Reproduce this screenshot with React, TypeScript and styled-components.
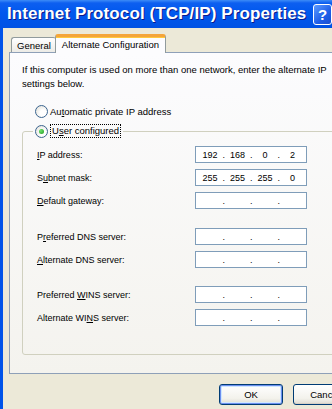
import styled, { createGlobalStyle } from 'styled-components';

const GlobalStyle = createGlobalStyle`
  body {
    margin: 0;
    overflow: hidden;
    background: #ece9d8;
    font-family: "Liberation Sans", Arial, sans-serif;
    color: #000;
  }
`;

const Window = styled.div`
  width: 366px;
  height: 409px;
  display: flex;
  flex-direction: column;
`;

const TitleBar = styled.div`
  height: 28px;
  flex-shrink: 0;
  display: flex;
  align-items: center;
  padding: 0 13px 0 7px;
  background: linear-gradient(#3d8cf7 0, #0d5ff0 3px, #0058ee 45%, #0052e4 100%);
`;

const Title = styled.div`
  font-size: 17px;
  font-weight: bold;
  letter-spacing: 0.1px;
  color: #fff;
  text-shadow: 1px 1px 0 #0c1a8a;
  white-space: nowrap;
`;

const TitleButtons = styled.div`
  margin-left: auto;
  display: flex;
  gap: 2px;
`;

const CaptionButton = styled.div<{ $close?: boolean }>`
  width: 19px;
  height: 21px;
  box-sizing: border-box;
  border: 1px solid #fff;
  border-radius: 3px;
  display: flex;
  align-items: center;
  justify-content: center;
  font-size: 15px;
  font-weight: bold;
  color: #fff;
  background: ${(p) =>
    p.$close
      ? 'linear-gradient(135deg, #e97c5c, #c8401a)'
      : 'linear-gradient(135deg, #5d9bff, #1e5ee8 60%, #1a4fcf)'};
`;

const Frame = styled.div`
  flex: 1;
  border-left: 3px solid #0053e9;
  border-right: 3px solid #0053e9;
  padding: 6px 6px 0 6px;
  background: #ece9d8;
`;

const TabRow = styled.div`
  display: flex;
  align-items: flex-end;
  height: 18px;
  padding-left: 2px;
  position: relative;
  z-index: 1;
`;

const Tab = styled.div<{ $active?: boolean }>`
  box-sizing: border-box;
  display: flex;
  align-items: center;
  font-size: 9.5px;
  white-space: nowrap;
  border: 1px solid #919b9c;
  border-bottom: none;
  border-radius: 3px 3px 0 0;
  ${(p) =>
    p.$active
      ? `
    height: 19px;
    margin-bottom: -1px;
    margin-left: -1px;
    padding: 0 6px 2px;
    border-top: 3px solid #f4a53a;
    box-shadow: inset 0 1px 0 #ffc83c;
    background: #fcfcfe;
  `
      : `
    height: 15px;
    padding: 0 5px;
    border-right: none;
    background: linear-gradient(#ffffff, #ecebe6);
  `}
`;

const Panel = styled.div`
  border: 1px solid #8ea0b8;
  background: linear-gradient(#fcfcfe, #f4f3ee);
  padding: 10px 12px 18px 12px;
`;

const Description = styled.p`
  margin: 0;
  font-size: 9.5px;
  line-height: 14px;
`;

const RadioRow = styled.div<{ $indent?: boolean }>`
  display: flex;
  align-items: center;
  gap: 2px;
  height: 16px;
  font-size: 9.5px;
  margin: ${(p) => (p.$indent ? '12px 0 0 13px' : '0')};
`;

const RadioCircle = styled.span<{ $checked?: boolean }>`
  width: 13px;
  height: 13px;
  box-sizing: border-box;
  border-radius: 50%;
  border: 1px solid #3b6590;
  background: radial-gradient(circle at 65% 65%, #ffffff 30%, #dcdbd3 100%);
  display: flex;
  align-items: center;
  justify-content: center;
  &::after {
    content: '';
    display: ${(p) => (p.$checked ? 'block' : 'none')};
    width: 5px;
    height: 5px;
    border-radius: 50%;
    background: radial-gradient(circle at 35% 35%, #6ee26e, #1f9a1f);
  }
`;

const Focus = styled.span`
  border: 1px dotted #000;
  padding: 0 1px;
  line-height: 12px;
`;

const Key = styled.span`
  text-decoration: underline;
`;

const GroupBox = styled.fieldset`
  margin: 4px 0 0 0;
  min-width: 0;
  border: 1px solid #d0d0bf;
  border-radius: 3px;
  padding: 7px 0 28px 10px;
`;

const Legend = styled.legend`
  padding: 0 2px;
  height: 16px;
`;

const FieldGroup = styled.div<{ $space: number }>`
  display: grid;
  grid-template-columns: 158px 112px;
  grid-auto-rows: 17px;
  row-gap: 6px;
  align-items: center;
  padding: ${(p) => p.$space}px 0 0 4px;
`;

const Label = styled.div`
  font-size: 9px;
  white-space: nowrap;
`;

const IpBox = styled.div`
  box-sizing: border-box;
  height: 17px;
  border: 1px solid #7f9db9;
  background: #fff;
  display: flex;
  align-items: center;
  padding-left: 4px;
  font-size: 9px;
`;

const Octet = styled.span`
  width: 20px;
  text-align: center;
`;

const Dot = styled.span`
  width: 7.5px;
  text-align: center;
`;

const ButtonRow = styled.div`
  display: flex;
  justify-content: flex-end;
  gap: 10px;
  margin-top: 10px;
`;

const Button = styled.div<{ $default?: boolean }>`
  width: 64px;
  height: 21px;
  box-sizing: border-box;
  border: 1px solid #003c74;
  border-radius: 3px;
  display: flex;
  align-items: center;
  justify-content: center;
  font-size: 9.5px;
  background: linear-gradient(#ffffff, #f3f2ec 70%, #dedcd2);
  box-shadow: ${(p) =>
    p.$default ? 'inset 0 0 0 1px #6b8eee, inset 0 0 0 2px #cee7ff' : 'inset 0 -1px 0 #d6d0c5'};
`;

type Field = { label: React.ReactNode; value?: string[] };

function IpField({ value }: { value?: string[] }) {
  const parts = value ?? ['', '', '', ''];
  return (
    <IpBox>
      {parts.map((p, i) => (
        <span key={i} style={{ display: 'contents' }}>
          <Octet>{p}</Octet>
          {i < 3 && <Dot>.</Dot>}
        </span>
      ))}
    </IpBox>
  );
}

const groups: { space: number; fields: Field[] }[] = [
  {
    space: 0,
    fields: [
      { label: <><Key>I</Key>P address:</>, value: ['192', '168', '0', '2'] },
      { label: <>S<Key>u</Key>bnet mask:</>, value: ['255', '255', '255', '0'] },
      { label: <><Key>D</Key>efault gateway:</> },
    ],
  },
  {
    space: 19,
    fields: [
      { label: <>P<Key>r</Key>eferred DNS server:</> },
      { label: <><Key>A</Key>lternate DNS server:</> },
    ],
  },
  {
    space: 18,
    fields: [
      { label: <>Preferred <Key>W</Key>INS server:</> },
      { label: <>Alternate WI<Key>N</Key>S server:</> },
    ],
  },
];

export default function App() {
  return (
    <Window>
      <GlobalStyle />
      <TitleBar>
        <Title>Internet Protocol (TCP/IP) Properties</Title>
        <TitleButtons>
          <CaptionButton>?</CaptionButton>
          <CaptionButton $close>×</CaptionButton>
        </TitleButtons>
      </TitleBar>
      <Frame>
        <TabRow>
          <Tab>General</Tab>
          <Tab $active>Alternate Configuration</Tab>
        </TabRow>
        <Panel>
          <Description>
            If this computer is used on more than one network, enter the alternate IP settings
            below.
          </Description>
          <RadioRow $indent>
            <RadioCircle />
            <span>
              Au<Key>t</Key>omatic private IP address
            </span>
          </RadioRow>
          <GroupBox>
            <Legend>
              <RadioRow>
                <RadioCircle $checked />
                <Focus>
                  U<Key>s</Key>er configured
                </Focus>
              </RadioRow>
            </Legend>
            {groups.map((g, gi) => (
              <FieldGroup key={gi} $space={g.space}>
                {g.fields.map((f, fi) => (
                  <span key={fi} style={{ display: 'contents' }}>
                    <Label>{f.label}</Label>
                    <IpField value={f.value} />
                  </span>
                ))}
              </FieldGroup>
            ))}
          </GroupBox>
        </Panel>
        <ButtonRow>
          <Button $default>OK</Button>
          <Button>Cancel</Button>
        </ButtonRow>
      </Frame>
    </Window>
  );
}
